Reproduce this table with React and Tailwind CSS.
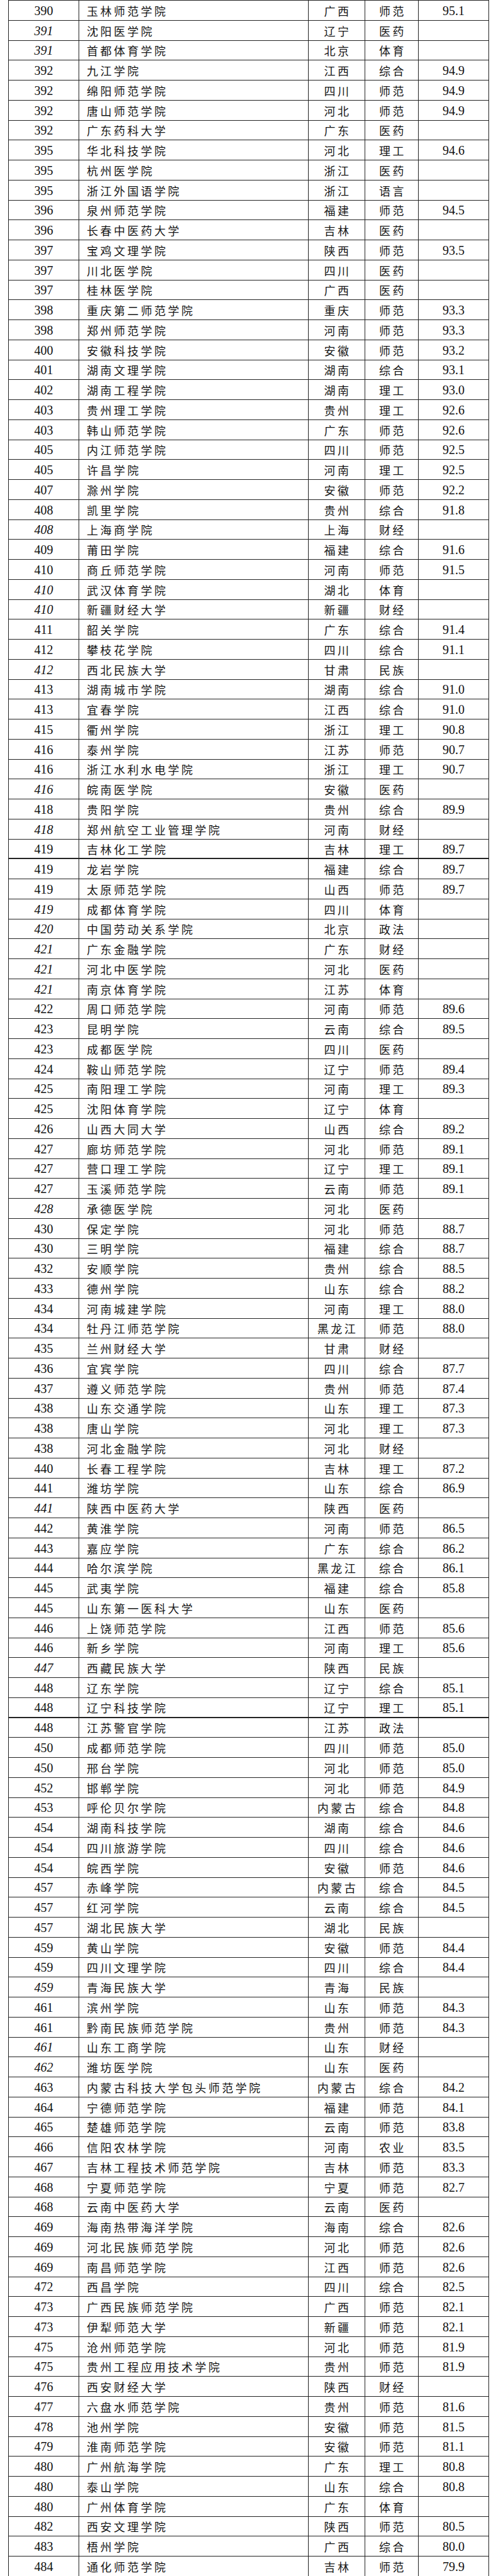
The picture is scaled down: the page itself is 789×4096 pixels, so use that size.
import React from 'react';

// rank | name | province | type | score | italic rank
const rows = [
  ['390', '玉林师范学院', '广西', '师范', '95.1'],
  ['391', '沈阳医学院', '辽宁', '医药', '', 1],
  ['391', '首都体育学院', '北京', '体育', '', 1],
  ['392', '九江学院', '江西', '综合', '94.9'],
  ['392', '绵阳师范学院', '四川', '师范', '94.9'],
  ['392', '唐山师范学院', '河北', '师范', '94.9'],
  ['392', '广东药科大学', '广东', '医药', ''],
  ['395', '华北科技学院', '河北', '理工', '94.6'],
  ['395', '杭州医学院', '浙江', '医药', ''],
  ['395', '浙江外国语学院', '浙江', '语言', ''],
  ['396', '泉州师范学院', '福建', '师范', '94.5'],
  ['396', '长春中医药大学', '吉林', '医药', ''],
  ['397', '宝鸡文理学院', '陕西', '师范', '93.5'],
  ['397', '川北医学院', '四川', '医药', ''],
  ['397', '桂林医学院', '广西', '医药', ''],
  ['398', '重庆第二师范学院', '重庆', '师范', '93.3'],
  ['398', '郑州师范学院', '河南', '师范', '93.3'],
  ['400', '安徽科技学院', '安徽', '师范', '93.2'],
  ['401', '湖南文理学院', '湖南', '综合', '93.1'],
  ['402', '湖南工程学院', '湖南', '理工', '93.0'],
  ['403', '贵州理工学院', '贵州', '理工', '92.6'],
  ['403', '韩山师范学院', '广东', '师范', '92.6'],
  ['405', '内江师范学院', '四川', '师范', '92.5'],
  ['405', '许昌学院', '河南', '理工', '92.5'],
  ['407', '滁州学院', '安徽', '师范', '92.2'],
  ['408', '凯里学院', '贵州', '综合', '91.8'],
  ['408', '上海商学院', '上海', '财经', '', 1],
  ['409', '莆田学院', '福建', '综合', '91.6'],
  ['410', '商丘师范学院', '河南', '师范', '91.5'],
  ['410', '武汉体育学院', '湖北', '体育', '', 1],
  ['410', '新疆财经大学', '新疆', '财经', '', 1],
  ['411', '韶关学院', '广东', '综合', '91.4'],
  ['412', '攀枝花学院', '四川', '综合', '91.1'],
  ['412', '西北民族大学', '甘肃', '民族', '', 1],
  ['413', '湖南城市学院', '湖南', '综合', '91.0'],
  ['413', '宜春学院', '江西', '综合', '91.0'],
  ['415', '衢州学院', '浙江', '理工', '90.8'],
  ['416', '泰州学院', '江苏', '师范', '90.7'],
  ['416', '浙江水利水电学院', '浙江', '理工', '90.7'],
  ['416', '皖南医学院', '安徽', '医药', '', 1],
  ['418', '贵阳学院', '贵州', '综合', '89.9'],
  ['418', '郑州航空工业管理学院', '河南', '财经', '', 1],
  ['419', '吉林化工学院', '吉林', '理工', '89.7'],
  ['419', '龙岩学院', '福建', '综合', '89.7'],
  ['419', '太原师范学院', '山西', '师范', '89.7'],
  ['419', '成都体育学院', '四川', '体育', '', 1],
  ['420', '中国劳动关系学院', '北京', '政法', '', 1],
  ['421', '广东金融学院', '广东', '财经', '', 1],
  ['421', '河北中医学院', '河北', '医药', '', 1],
  ['421', '南京体育学院', '江苏', '体育', '', 1],
  ['422', '周口师范学院', '河南', '师范', '89.6'],
  ['423', '昆明学院', '云南', '综合', '89.5'],
  ['423', '成都医学院', '四川', '医药', ''],
  ['424', '鞍山师范学院', '辽宁', '师范', '89.4'],
  ['425', '南阳理工学院', '河南', '理工', '89.3'],
  ['425', '沈阳体育学院', '辽宁', '体育', ''],
  ['426', '山西大同大学', '山西', '综合', '89.2'],
  ['427', '廊坊师范学院', '河北', '师范', '89.1'],
  ['427', '营口理工学院', '辽宁', '理工', '89.1'],
  ['427', '玉溪师范学院', '云南', '师范', '89.1'],
  ['428', '承德医学院', '河北', '医药', '', 1],
  ['430', '保定学院', '河北', '师范', '88.7'],
  ['430', '三明学院', '福建', '综合', '88.7'],
  ['432', '安顺学院', '贵州', '综合', '88.5'],
  ['433', '德州学院', '山东', '综合', '88.2'],
  ['434', '河南城建学院', '河南', '理工', '88.0'],
  ['434', '牡丹江师范学院', '黑龙江', '师范', '88.0'],
  ['435', '兰州财经大学', '甘肃', '财经', ''],
  ['436', '宜宾学院', '四川', '综合', '87.7'],
  ['437', '遵义师范学院', '贵州', '师范', '87.4'],
  ['438', '山东交通学院', '山东', '理工', '87.3'],
  ['438', '唐山学院', '河北', '理工', '87.3'],
  ['438', '河北金融学院', '河北', '财经', ''],
  ['440', '长春工程学院', '吉林', '理工', '87.2'],
  ['441', '潍坊学院', '山东', '综合', '86.9'],
  ['441', '陕西中医药大学', '陕西', '医药', '', 1],
  ['442', '黄淮学院', '河南', '师范', '86.5'],
  ['443', '嘉应学院', '广东', '综合', '86.2'],
  ['444', '哈尔滨学院', '黑龙江', '综合', '86.1'],
  ['445', '武夷学院', '福建', '综合', '85.8'],
  ['445', '山东第一医科大学', '山东', '医药', ''],
  ['446', '上饶师范学院', '江西', '师范', '85.6'],
  ['446', '新乡学院', '河南', '理工', '85.6'],
  ['447', '西藏民族大学', '陕西', '民族', '', 1],
  ['448', '辽东学院', '辽宁', '综合', '85.1'],
  ['448', '辽宁科技学院', '辽宁', '理工', '85.1'],
  ['448', '江苏警官学院', '江苏', '政法', ''],
  ['450', '成都师范学院', '四川', '师范', '85.0'],
  ['450', '邢台学院', '河北', '师范', '85.0'],
  ['452', '邯郸学院', '河北', '师范', '84.9'],
  ['453', '呼伦贝尔学院', '内蒙古', '综合', '84.8'],
  ['454', '湖南科技学院', '湖南', '综合', '84.6'],
  ['454', '四川旅游学院', '四川', '综合', '84.6'],
  ['454', '皖西学院', '安徽', '师范', '84.6'],
  ['457', '赤峰学院', '内蒙古', '综合', '84.5'],
  ['457', '红河学院', '云南', '综合', '84.5'],
  ['457', '湖北民族大学', '湖北', '民族', ''],
  ['459', '黄山学院', '安徽', '师范', '84.4'],
  ['459', '四川文理学院', '四川', '综合', '84.4'],
  ['459', '青海民族大学', '青海', '民族', '', 1],
  ['461', '滨州学院', '山东', '师范', '84.3'],
  ['461', '黔南民族师范学院', '贵州', '师范', '84.3'],
  ['461', '山东工商学院', '山东', '财经', '', 1],
  ['462', '潍坊医学院', '山东', '医药', '', 1],
  ['463', '内蒙古科技大学包头师范学院', '内蒙古', '综合', '84.2'],
  ['464', '宁德师范学院', '福建', '师范', '84.1'],
  ['465', '楚雄师范学院', '云南', '师范', '83.8'],
  ['466', '信阳农林学院', '河南', '农业', '83.5'],
  ['467', '吉林工程技术师范学院', '吉林', '师范', '83.3'],
  ['468', '宁夏师范学院', '宁夏', '师范', '82.7'],
  ['468', '云南中医药大学', '云南', '医药', ''],
  ['469', '海南热带海洋学院', '海南', '综合', '82.6'],
  ['469', '河北民族师范学院', '河北', '师范', '82.6'],
  ['469', '南昌师范学院', '江西', '师范', '82.6'],
  ['472', '西昌学院', '四川', '综合', '82.5'],
  ['473', '广西民族师范学院', '广西', '师范', '82.1'],
  ['473', '伊犁师范大学', '新疆', '师范', '82.1'],
  ['475', '沧州师范学院', '河北', '师范', '81.9'],
  ['475', '贵州工程应用技术学院', '贵州', '师范', '81.9'],
  ['476', '西安财经大学', '陕西', '财经', ''],
  ['477', '六盘水师范学院', '贵州', '师范', '81.6'],
  ['478', '池州学院', '安徽', '师范', '81.5'],
  ['479', '淮南师范学院', '安徽', '师范', '81.1'],
  ['480', '广州航海学院', '广东', '理工', '80.8'],
  ['480', '泰山学院', '山东', '综合', '80.8'],
  ['480', '广州体育学院', '广东', '体育', ''],
  ['482', '西安文理学院', '陕西', '师范', '80.5'],
  ['483', '梧州学院', '广西', '综合', '80.0'],
  ['484', '通化师范学院', '吉林', '师范', '79.9'],
];

// rows followed by a heavier rule in the scan
const thick = new Set([42, 85]);

const cjk = { fontFamily: '"Noto Sans CJK SC", "Noto Sans", sans-serif' };
const num = { fontFamily: '"Liberation Serif", "DejaVu Serif", serif' };

const Row = ({ row, index }) => {
  const [rank, name, prov, kind, score, it] = row;
  return (
    <div
      className={`flex h-[31.75px] border-[#222] ${thick.has(index) ? 'border-b-2' : 'border-b'}`}
    >
      <div className="w-[112px] shrink-0 border-r border-[#222] flex items-center justify-center pt-[1px]">
        <span className={`text-[20px] leading-none text-[#111] ${it ? 'italic' : ''}`} style={num}>
          {rank}
        </span>
      </div>
      <div className="w-[365px] shrink-0 border-r border-[#222] flex items-center pl-[12px] pt-[1px]">
        <span className="text-[18px] leading-none tracking-[3.5px] text-[#161616] whitespace-nowrap" style={cjk}>
          {name}
        </span>
      </div>
      <div className="w-[90px] shrink-0 border-r border-[#222] flex items-center justify-center pt-[1px] pl-[3px]">
        <span className="text-[18px] leading-none tracking-[3.5px] text-[#161616] whitespace-nowrap" style={cjk}>
          {prov}
        </span>
      </div>
      <div className="w-[85px] shrink-0 border-r border-[#222] flex items-center justify-center pt-[1px] pl-[3px]">
        <span className="text-[18px] leading-none tracking-[3.5px] text-[#161616] whitespace-nowrap" style={cjk}>
          {kind}
        </span>
      </div>
      <div className="w-[112px] shrink-0 border-r border-[#222] flex items-center justify-center pt-[1px]">
        <span className="text-[20px] leading-none text-[#111]" style={num}>
          {score}
        </span>
      </div>
    </div>
  );
};

export default function App() {
  return (
    <div className="w-[789px] bg-white pl-[13px] overflow-hidden">
      <div className="w-[765px] border-l border-t border-[#222]">
        {rows.map((row, i) => (
          <Row key={i} row={row} index={i} />
        ))}
      </div>
    </div>
  );
}
